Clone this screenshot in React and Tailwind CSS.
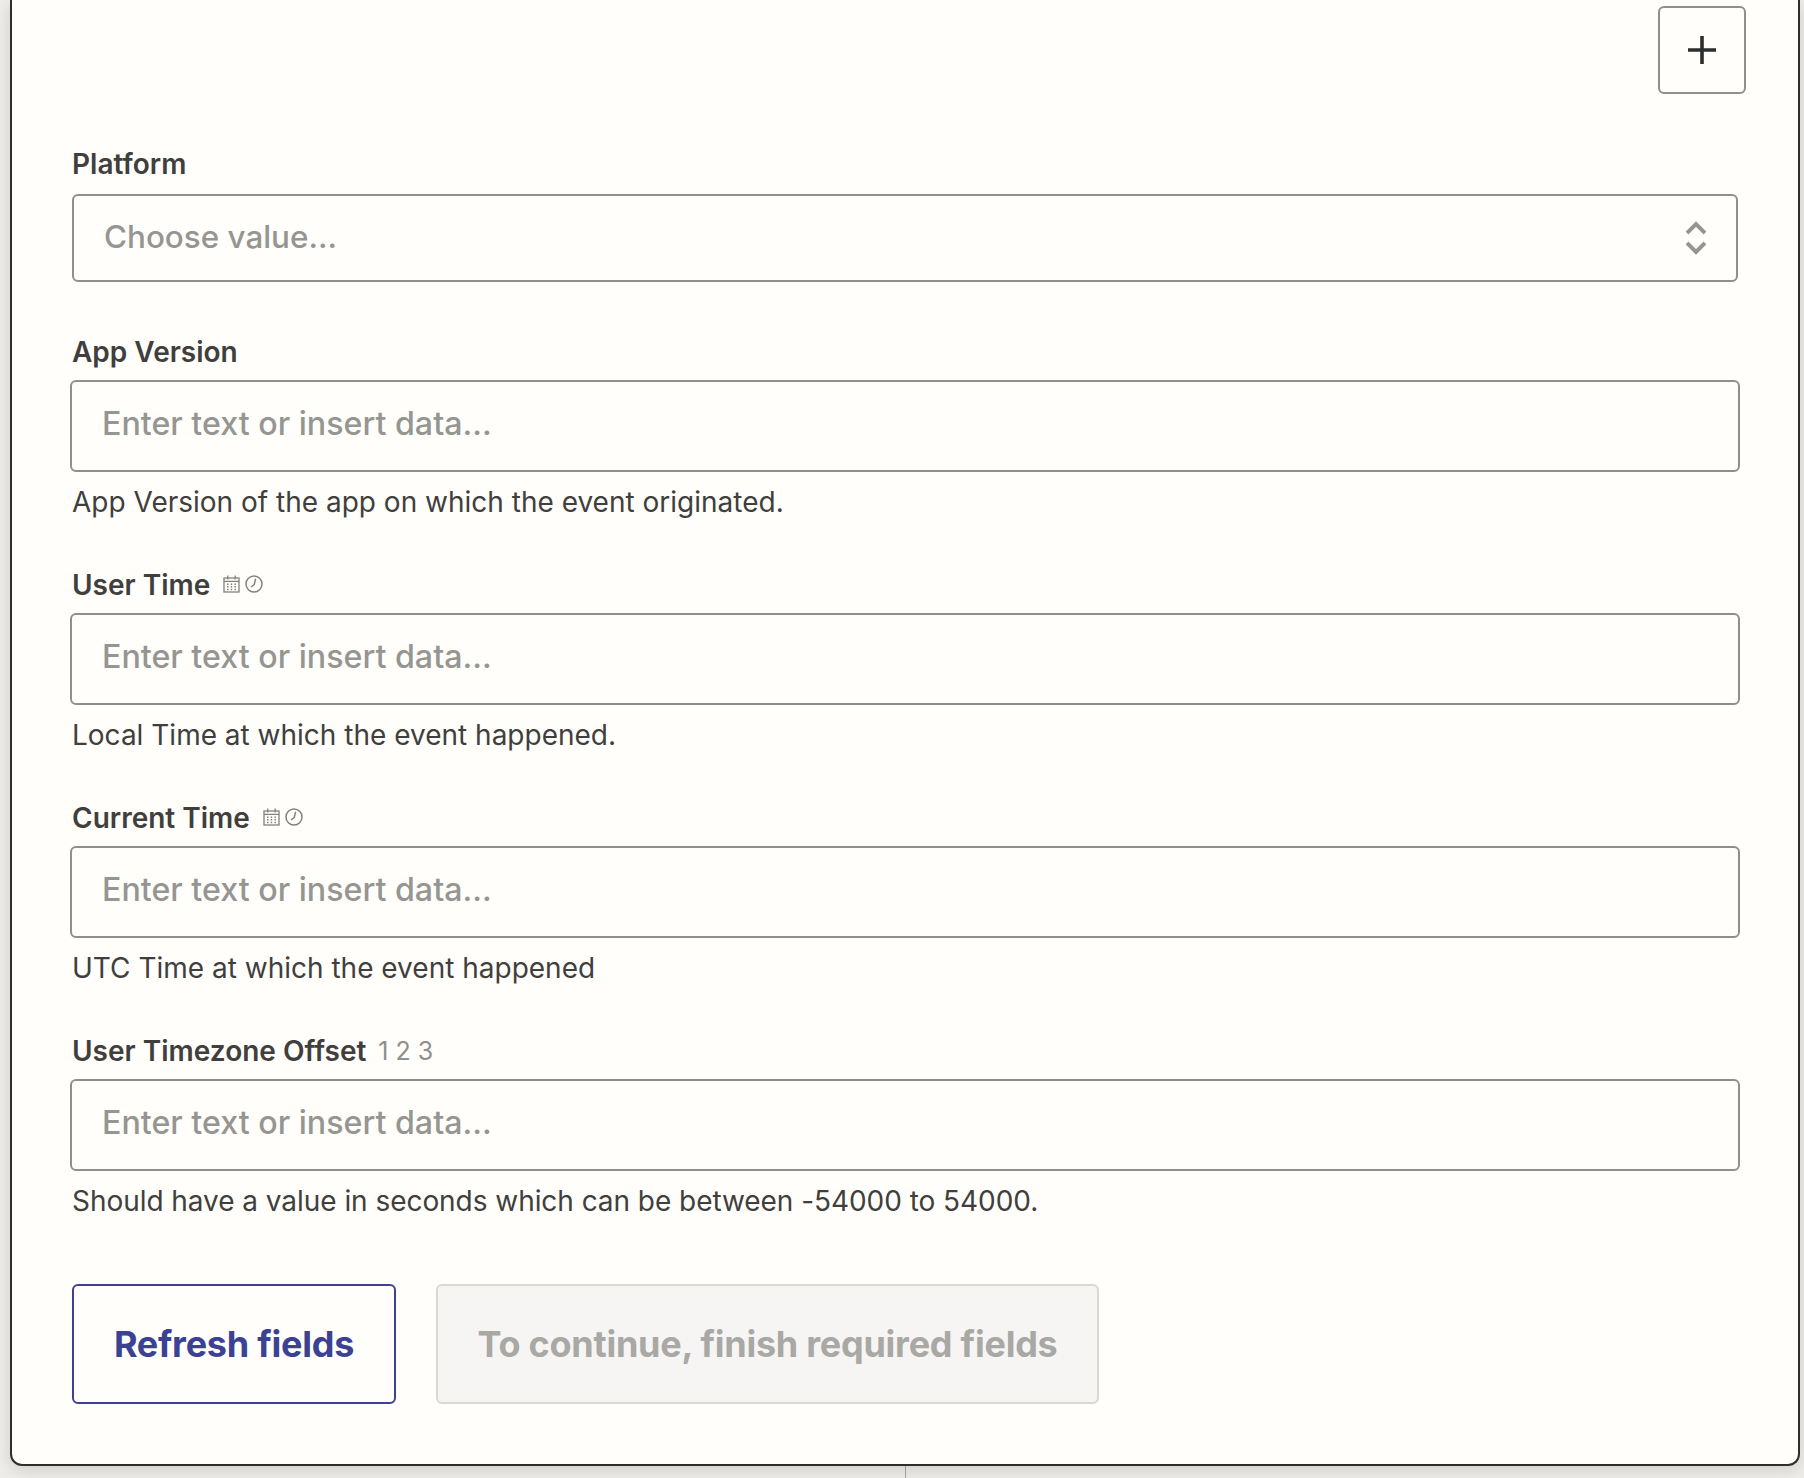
function CalendarIcon() {
  return (
    <svg width="17" height="18" viewBox="0 0 17 18" fill="none" stroke="#82827e" strokeWidth="1.3">
      <rect x="1" y="3" width="15" height="14" />
      <path d="M1 6.4h15M4.8 0.6v4M12.2 0.6v4" />
      <path d="M4 9.2h1.5M7.7 9.2h1.5M11.4 9.2h1.5M4 11.8h1.5M7.7 11.8h1.5M11.4 11.8h1.5M4 14.4h1.5M7.7 14.4h1.5M11.4 14.4h1.5" strokeWidth="1.5" />
    </svg>
  );
}

function ClockIcon() {
  return (
    <svg width="18" height="18" viewBox="0 0 18 18" fill="none" stroke="#82827e" strokeWidth="1.5">
      <circle cx="9" cy="9" r="8" />
      <path d="M10.6 3.8 9.2 9.6 6 12" />
    </svg>
  );
}

function Field({ label, extra, help, helpClass = "" }) {
  return (
    <div className="mb-[52px]">
      <div className="-mt-px ml-0.5 flex h-8 items-center text-[28px] leading-8 font-semibold text-[#403f3e]">
        <span>{label}</span>
        {extra}
      </div>
      <div className="mt-3 flex h-[92px] items-center rounded-[6px] border-2 border-[#8f8f8b] pb-1 pl-[30px] text-[32.2px] font-medium text-[#959592]">
        Enter text or insert data...
      </div>
      <p className={`mt-3.5 ml-0.5 h-8 text-[28px] leading-8 text-[#403f3e] ${helpClass}`}>{help}</p>
    </div>
  );
}

const dateIcons = (
  <span className="mb-0.5 ml-[13px] flex items-center gap-[5px]">
    <CalendarIcon />
    <ClockIcon />
  </span>
);

export default function App() {
  return (
    <div className="relative h-[1478px] w-[1804px] overflow-hidden bg-[#efeeeb] font-['Inter',sans-serif]">
      <div className="absolute top-[1466px] bottom-0 left-[905px] w-px bg-[#a8a8a4]" />
      <div className="relative ml-2.5 h-[1466px] w-[1790px] rounded-b-[12px] border-x-2 border-b-2 border-[#2d2e2e] bg-[#fffefa] shadow-[0_4px_18px_rgba(0,0,0,0.14)]">
        <div className="flex justify-end pt-1.5 pr-[52px]">
          <button className="flex h-[88px] w-[88px] items-center justify-center rounded-[6px] border-2 border-[#8f8f8b]">
            <svg width="28" height="28" viewBox="0 0 28 28" fill="none" stroke="#2d2e2e" strokeWidth="3.6">
              <path d="M14 0v28M0 14h28" />
            </svg>
          </button>
        </div>

        <div className="pr-[58px] pl-[58px]">
          <div className="mt-[54px] mb-[55px]">
            <div className="ml-0.5 h-8 text-[28px] leading-8 font-semibold text-[#403f3e]">Platform</div>
            <div className="mx-0.5 mt-3.5 flex h-[88px] items-center justify-between rounded-[6px] border-2 border-[#8f8f8b] pr-[30px] pl-[30px] text-[31.4px] font-medium text-[#959592]">
              <span>Choose value...</span>
              <svg width="20" height="34" viewBox="0 0 20 34" fill="none" stroke="#959592" strokeWidth="4">
                <path d="M1 12 10 3 19 12M1 22 10 31 19 22" />
              </svg>
            </div>
          </div>

          <Field label="App Version" help="App Version of the app on which the event originated." />
          <Field label="User Time" extra={dateIcons} help="Local Time at which the event happened." />
          <Field label="Current Time" extra={dateIcons} help="UTC Time at which the event happened" />
          <Field
            label="User Timezone Offset"
            extra={<span className="ml-3 text-[25px] font-normal text-[#8f8f8b]">1 2 3</span>}
            help="Should have a value in seconds which can be between -54000 to 54000."
            helpClass="tracking-[-0.05px]"
          />

          <div className="mt-[67px] ml-0.5 flex gap-10">
            <button className="h-[120px] w-[324px] rounded-[6px] border-2 border-[#3b4293] text-[36px] font-bold tracking-[-0.25px] text-[#3b4293]">
              Refresh fields
            </button>
            <button className="h-[120px] w-[663px] rounded-[6px] border-2 border-[#d8d8d4] bg-[#f6f5f3] text-[36px] font-bold tracking-[-0.25px] text-[#a8a8a5]">
              To continue, finish required fields
            </button>
          </div>
        </div>
      </div>
    </div>
  );
}
